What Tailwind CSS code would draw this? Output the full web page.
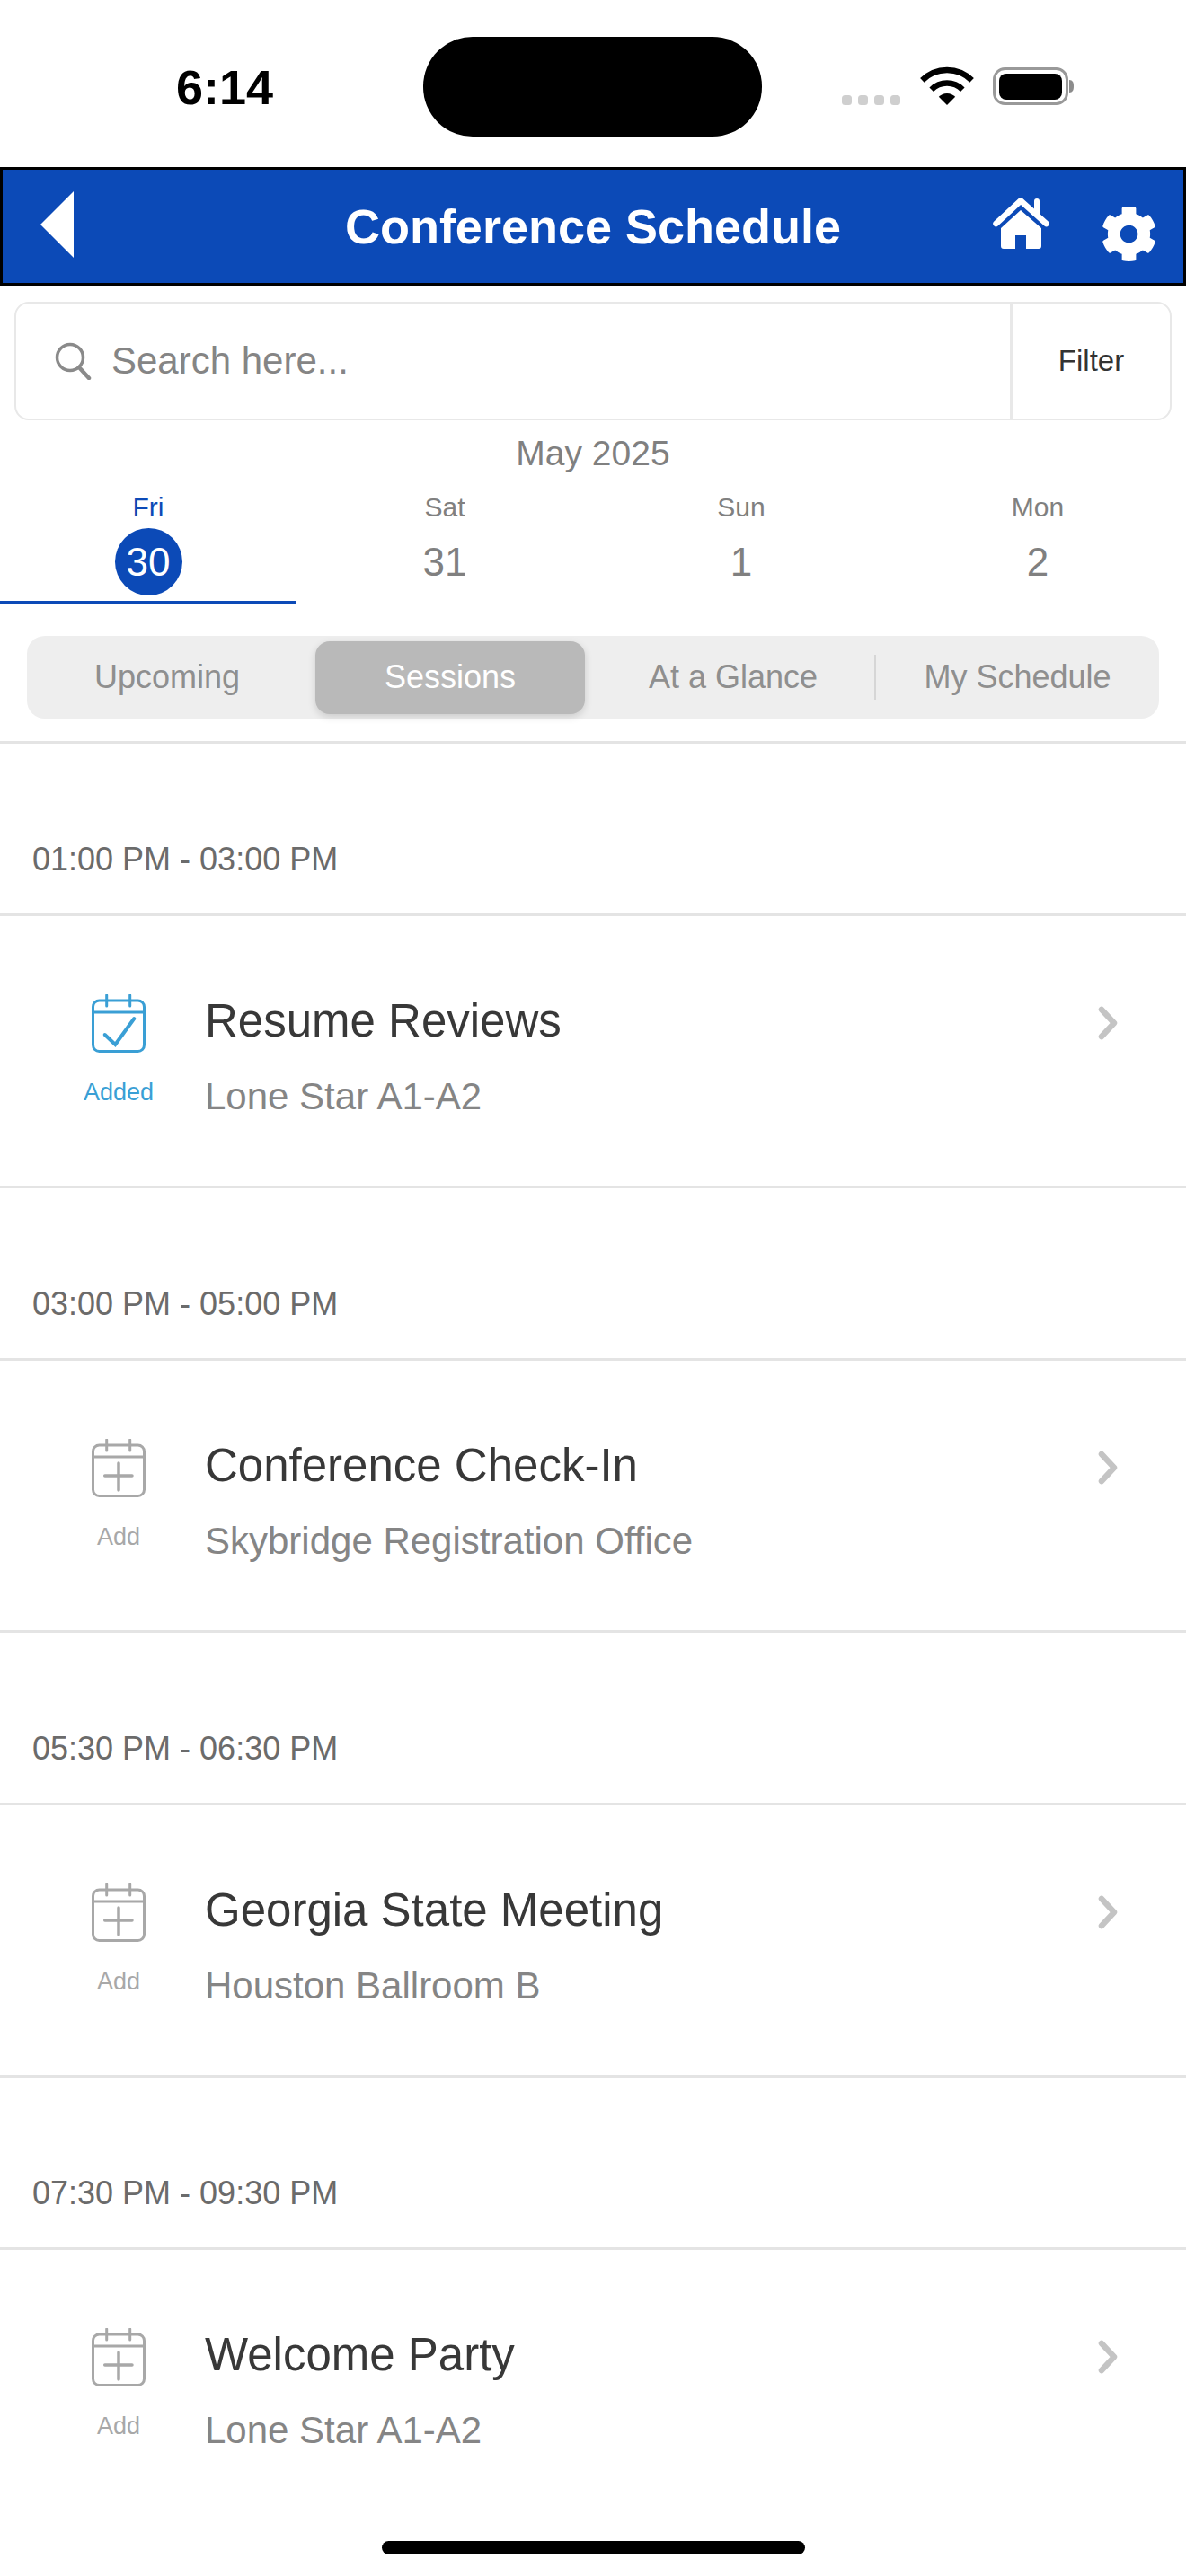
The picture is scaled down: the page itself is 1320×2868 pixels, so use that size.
<!DOCTYPE html>
<html lang="en">
<head>
  <meta charset="UTF-8">
  <title>Conference Schedule</title>
  <script src="https://cdn.jsdelivr.net/npm/@tailwindcss/browser@4"></script>
</head>
<body class="bg-white font-['Liberation_Sans',sans-serif] w-[1320px] h-[2868px] overflow-hidden relative">

  <!-- status bar -->
  <div class="h-[186px] relative">
    <span class="absolute left-[196px] top-[69px] text-[54px] leading-[56px] font-bold text-black">6:14</span>
    <div class="absolute left-[471px] top-[41px] w-[377px] h-[111px] rounded-[55px] bg-black"></div>
    <svg class="absolute left-[930px] top-[70px]" width="270" height="54" viewBox="0 0 270 54">
      <rect x="7" y="36" width="11" height="11" rx="3.5" fill="#cfcfcf"/>
      <rect x="25" y="36" width="11" height="11" rx="3.5" fill="#cfcfcf"/>
      <rect x="43" y="36" width="11" height="11" rx="3.5" fill="#cfcfcf"/>
      <rect x="61" y="36" width="11" height="11" rx="3.5" fill="#cfcfcf"/>
      <path d="M96.4 19.4 A39 39 0 0 1 151.6 19.4" fill="none" stroke="#000" stroke-width="6.5"/>
      <path d="M106.7 29.7 A24.5 24.5 0 0 1 141.3 29.7" fill="none" stroke="#000" stroke-width="6.5"/>
      <path d="M124 47 L114.8 37.8 A13 13 0 0 1 133.2 37.8 Z" fill="#000"/>
      <rect x="176.5" y="6.5" width="81" height="39" rx="12" fill="none" stroke="#999" stroke-width="3"/>
      <rect x="182" y="12" width="70" height="29" rx="8" fill="#000"/>
      <path d="M260 19 c4 0 5 3 5 7 s-1 7 -5 7 z" fill="#8c8c8c"/>
    </svg>
  </div>

  <!-- header -->
  <header class="h-[132px] bg-[#0c4ab7] border-[3px] border-black relative flex items-center justify-center">
    <svg class="absolute left-[42px] top-[24px]" width="37" height="74" viewBox="0 0 37 74"><path d="M0 37 L37 0 V74 Z" fill="#fff"/></svg>
    <h1 class="text-[54px] leading-[60px] font-bold text-white">Conference Schedule</h1>
    <svg class="absolute left-[1102px] top-[31px]" width="63" height="58" viewBox="0 0 63 58">
      <path d="M3.5 29 L31 3.5 L59.5 29" fill="none" stroke="#fff" stroke-width="6.5" stroke-linecap="round" stroke-linejoin="round"/>
      <path d="M46 14 V4 a3 3 0 0 1 6 0 V20 Z" fill="#fff"/>
      <path d="M31 14 L54 34 V54 a3 3 0 0 1 -3 3 H37 V42 H25 V57 H12 a3 3 0 0 1 -3 -3 V34 Z" fill="#fff"/>
    </svg>
    <svg class="absolute left-[1222px] top-[40px]" width="63" height="63" viewBox="0 0 512 512"><path fill="#fff" d="M487.4 315.7l-42.6-24.6c4.3-23.2 4.3-47 0-70.2l42.6-24.6c4.9-2.8 7.1-8.6 5.5-14-11.1-35.6-30-67.8-54.7-94.6-3.8-4.1-10-5.1-14.8-2.3L380.8 110c-17.9-15.4-38.5-27.3-60.8-35.1V25.8c0-5.6-3.9-10.5-9.4-11.7-36.7-8.2-74.3-7.8-109.2 0-5.5 1.2-9.4 6.1-9.4 11.7V75c-22.2 7.9-42.8 19.8-60.8 35.1L88.7 85.5c-4.9-2.8-11-1.9-14.8 2.3-24.7 26.7-43.6 58.9-54.7 94.6-1.7 5.4.6 11.2 5.5 14L67.3 221c-4.3 23.2-4.3 47 0 70.2l-42.6 24.6c-4.9 2.8-7.1 8.6-5.5 14 11.1 35.6 30 67.8 54.7 94.6 3.8 4.1 10 5.1 14.8 2.3l42.6-24.6c17.9 15.4 38.5 27.3 60.8 35.1v49.2c0 5.6 3.9 10.5 9.4 11.7 36.7 8.2 74.3 7.8 109.2 0 5.5-1.2 9.4-6.1 9.4-11.7v-49.2c22.2-7.9 42.8-19.8 60.8-35.1l42.6 24.6c4.9 2.8 11 1.9 14.8-2.3 24.7-26.7 43.6-58.9 54.7-94.6 1.5-5.5-.7-11.3-5.6-14.1zM256 336c-44.1 0-80-35.9-80-80s35.9-80 80-80 80 35.9 80 80-35.9 80-80 80z"/></svg>
  </header>

  <!-- search -->
  <div class="mt-[18px] mx-[16px] h-[132px] rounded-[16px] border-2 border-[#e8e8e8] flex">
    <div class="flex-1 flex items-center pl-[43px] gap-[21px]">
      <svg width="42" height="42" viewBox="0 0 42 42"><circle cx="17" cy="17" r="14.5" fill="none" stroke="#8a8a8a" stroke-width="3.5"/><path d="M27 28 L38 40" stroke="#8a8a8a" stroke-width="4.5" stroke-linecap="round"/></svg>
      <span class="text-[42px] leading-[48px] text-[#858585]">Search here...</span>
    </div>
    <div class="w-[178px] border-l-[3px] border-[#e8e8e8] flex items-center justify-center text-[33px] text-[#333]">Filter</div>
  </div>

  <!-- month -->
  <div class="mt-[16px] text-center text-[39px] leading-[42px] text-[#808080]">May 2025</div>

  <!-- days -->
  <div class="mt-[22px] grid grid-cols-4 h-[124px]">
    <div class="flex flex-col items-center border-b-[3px] border-[#0c4ab7]">
      <span class="text-[30px] leading-[34px] text-[#0c4ab7]">Fri</span>
      <span class="mt-[6px] w-[75px] h-[75px] rounded-full bg-[#0c4ab7] text-white text-[44px] flex items-center justify-center">30</span>
    </div>
    <div class="flex flex-col items-center">
      <span class="text-[30px] leading-[34px] text-[#808080]">Sat</span>
      <span class="mt-[6px] h-[75px] text-[#808080] text-[44px] flex items-center justify-center">31</span>
    </div>
    <div class="flex flex-col items-center">
      <span class="text-[30px] leading-[34px] text-[#808080]">Sun</span>
      <span class="mt-[6px] h-[75px] text-[#808080] text-[44px] flex items-center justify-center">1</span>
    </div>
    <div class="flex flex-col items-center">
      <span class="text-[30px] leading-[34px] text-[#808080]">Mon</span>
      <span class="mt-[6px] h-[75px] text-[#808080] text-[44px] flex items-center justify-center">2</span>
    </div>
  </div>

  <!-- segmented control -->
  <div class="mt-[36px] mx-[30px] h-[92px] rounded-[20px] bg-[#eeeeee] flex items-center pl-[6px] text-[36px] text-[#8f8f8f]">
    <div class="w-[300px] mr-[15px] text-center">Upcoming</div>
    <div class="w-[300px] h-[81px] rounded-[16px] bg-[#b9b9b9] text-white flex items-center justify-center shadow-[0_3px_8px_rgba(0,0,0,0.15)]">Sessions</div>
    <div class="w-[322px] pl-[8px] text-center">At a Glance</div>
    <div class="w-[2px] h-[50px] bg-[#d6d6d6]"></div>
    <div class="flex-1 text-center">My Schedule</div>
  </div>

  <div class="mt-[25px] border-t-[3px] border-[#e4e4e4]">
    <!-- session 1 -->
    <div class="h-[192px] flex items-end pb-[40px] pl-[36px] text-[36px] leading-[40px] text-[#6b6b6b] border-b-[3px] border-[#e4e4e4]">01:00 PM - 03:00 PM</div>
    <div class="h-[303px] border-b-[3px] border-[#e4e4e4] flex">
      <div class="w-[228px] pl-[36px] flex flex-col items-center pt-[87px]">
        <svg width="60" height="65" viewBox="0 0 60 65" fill="none" stroke="#3a9fd5" stroke-width="3" stroke-linecap="round"><rect x="1.5" y="7" width="57" height="56.5" rx="7"/><path d="M1.5 20 H58.5 M16.7 1 V13 M42.7 1 V13"/><path stroke-width="4" d="M14.7 45 L26.3 56 L47.3 27"/></svg>
        <span class="mt-[29px] text-[27px] leading-[30px] text-[#3a9fd5]">Added</span>
      </div>
      <div class="flex-1 pt-[88px]">
        <div class="text-[51px] leading-[58px] text-[#383838]">Resume Reviews</div>
        <div class="mt-[32px] text-[42px] leading-[46px] text-[#858585]">Lone Star A1-A2</div>
      </div>
      <svg class="mt-[100px] mr-[76px]" width="22" height="38" viewBox="0 0 22 38" fill="none" stroke="#c4c4c4" stroke-width="6.5" stroke-linecap="round" stroke-linejoin="round"><path d="M4 4 L18 19 L4 34"/></svg>
    </div>
    <!-- session 2 -->
    <div class="h-[192px] flex items-end pb-[40px] pl-[36px] text-[36px] leading-[40px] text-[#6b6b6b] border-b-[3px] border-[#e4e4e4]">03:00 PM - 05:00 PM</div>
    <div class="h-[303px] border-b-[3px] border-[#e4e4e4] flex">
      <div class="w-[228px] pl-[36px] flex flex-col items-center pt-[87px]">
        <svg width="60" height="65" viewBox="0 0 60 65" fill="none" stroke="#a8a8a8" stroke-width="3" stroke-linecap="round"><rect x="1.5" y="7" width="57" height="56.5" rx="7"/><path d="M1.5 20 H58.5 M16.7 1 V13 M42.7 1 V13"/><path stroke-width="3.5" d="M30 27 V57 M14.7 41 H45"/></svg>
        <span class="mt-[29px] text-[27px] leading-[30px] text-[#a8a8a8]">Add</span>
      </div>
      <div class="flex-1 pt-[88px]">
        <div class="text-[51px] leading-[58px] text-[#383838]">Conference Check-In</div>
        <div class="mt-[32px] text-[42px] leading-[46px] text-[#858585]">Skybridge Registration Office</div>
      </div>
      <svg class="mt-[100px] mr-[76px]" width="22" height="38" viewBox="0 0 22 38" fill="none" stroke="#c4c4c4" stroke-width="6.5" stroke-linecap="round" stroke-linejoin="round"><path d="M4 4 L18 19 L4 34"/></svg>
    </div>
    <!-- session 3 -->
    <div class="h-[192px] flex items-end pb-[40px] pl-[36px] text-[36px] leading-[40px] text-[#6b6b6b] border-b-[3px] border-[#e4e4e4]">05:30 PM - 06:30 PM</div>
    <div class="h-[303px] border-b-[3px] border-[#e4e4e4] flex">
      <div class="w-[228px] pl-[36px] flex flex-col items-center pt-[87px]">
        <svg width="60" height="65" viewBox="0 0 60 65" fill="none" stroke="#a8a8a8" stroke-width="3" stroke-linecap="round"><rect x="1.5" y="7" width="57" height="56.5" rx="7"/><path d="M1.5 20 H58.5 M16.7 1 V13 M42.7 1 V13"/><path stroke-width="3.5" d="M30 27 V57 M14.7 41 H45"/></svg>
        <span class="mt-[29px] text-[27px] leading-[30px] text-[#a8a8a8]">Add</span>
      </div>
      <div class="flex-1 pt-[88px]">
        <div class="text-[51px] leading-[58px] text-[#383838]">Georgia State Meeting</div>
        <div class="mt-[32px] text-[42px] leading-[46px] text-[#858585]">Houston Ballroom B</div>
      </div>
      <svg class="mt-[100px] mr-[76px]" width="22" height="38" viewBox="0 0 22 38" fill="none" stroke="#c4c4c4" stroke-width="6.5" stroke-linecap="round" stroke-linejoin="round"><path d="M4 4 L18 19 L4 34"/></svg>
    </div>
    <!-- session 4 -->
    <div class="h-[192px] flex items-end pb-[40px] pl-[36px] text-[36px] leading-[40px] text-[#6b6b6b] border-b-[3px] border-[#e4e4e4]">07:30 PM - 09:30 PM</div>
    <div class="h-[303px] flex">
      <div class="w-[228px] pl-[36px] flex flex-col items-center pt-[87px]">
        <svg width="60" height="65" viewBox="0 0 60 65" fill="none" stroke="#a8a8a8" stroke-width="3" stroke-linecap="round"><rect x="1.5" y="7" width="57" height="56.5" rx="7"/><path d="M1.5 20 H58.5 M16.7 1 V13 M42.7 1 V13"/><path stroke-width="3.5" d="M30 27 V57 M14.7 41 H45"/></svg>
        <span class="mt-[29px] text-[27px] leading-[30px] text-[#a8a8a8]">Add</span>
      </div>
      <div class="flex-1 pt-[88px]">
        <div class="text-[51px] leading-[58px] text-[#383838]">Welcome Party</div>
        <div class="mt-[32px] text-[42px] leading-[46px] text-[#858585]">Lone Star A1-A2</div>
      </div>
      <svg class="mt-[100px] mr-[76px]" width="22" height="38" viewBox="0 0 22 38" fill="none" stroke="#c4c4c4" stroke-width="6.5" stroke-linecap="round" stroke-linejoin="round"><path d="M4 4 L18 19 L4 34"/></svg>
    </div>
  </div>

  <!-- home indicator -->
  <div class="absolute left-[425px] top-[2829px] w-[471px] h-[15px] rounded-full bg-black"></div>
</body>
</html>
